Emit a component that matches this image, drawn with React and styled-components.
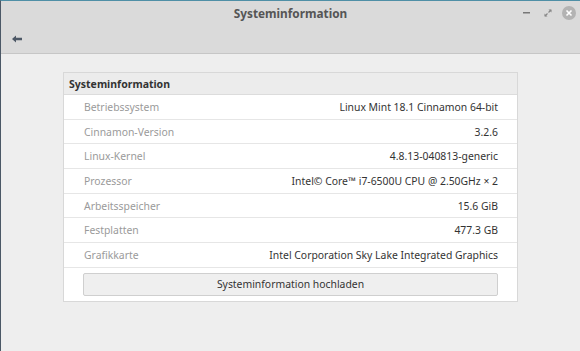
import styled, { createGlobalStyle } from "styled-components";

const Global = createGlobalStyle`
  html, body { margin: 0; padding: 0; }
  body {
    width: 580px;
    height: 351px;
    overflow: hidden;
    font-family: "Noto Sans", "DejaVu Sans", sans-serif;
    background: #eeeeee;
  }
`;

const Win = styled.div`
  width: 580px;
  height: 351px;
  box-sizing: border-box;
  border-left: 1px solid #4b5866;
  border-top: 1px solid #4f8fa6;
  display: flex;
  flex-direction: column;
  background: #eeeeee;
`;

const Header = styled.div`
  background: #dadada;
  border-bottom: 1px solid #c6c6c6;
  height: 52px;
  display: flex;
  flex-direction: column;
`;

const TitleBar = styled.div`
  height: 23px;
  display: grid;
  grid-template-columns: 1fr auto 1fr;
  align-items: center;
`;

const Title = styled.div`
  font-size: 11.8px;
  font-weight: bold;
  color: #555;
`;

const Controls = styled.div`
  justify-self: end;
  display: flex;
  align-items: center;
  gap: 8px;
  padding-right: 4px;
`;

const Ctl = styled.span`
  display: inline-flex;
  width: 13px;
  height: 12px;
  align-items: center;
  justify-content: center;
`;

const Close = styled.span`
  width: 14px;
  height: 14px;
  border-radius: 50%;
  background: #b3b3b3;
  display: inline-flex;
  align-items: center;
  justify-content: center;
`;

const Toolbar = styled.div`
  flex: 1;
  display: flex;
  align-items: center;
  padding-left: 11px;
  padding-top: 1px;
`;

const Body = styled.div`
  flex: 1;
  padding: 18px 62px 0 62px;
`;

const Card = styled.div`
  border: 1px solid #d8d8d8;
  background: #ffffff;
  padding-bottom: 5px;
`;

const CardHead = styled.div`
  background: #ececec;
  height: 21px;
  display: flex;
  align-items: center;
  padding-left: 5px;
  font-size: 10.5px;
  font-weight: bold;
  color: #333;
  border-bottom: 1px solid #dcdcdc;
`;

const Row = styled.div`
  height: 23.7px;
  border-bottom: 1px solid #e6e6e6;
  display: flex;
  align-items: center;
  justify-content: space-between;
  padding: 0 19px 0 20px;
  font-size: 10.4px;
`;

const Label = styled.span`
  color: #9a9a9a;
`;

const Value = styled.span`
  color: #333;
`;

const Upload = styled.button`
  display: block;
  margin: 5px 19px 0 19px;
  width: calc(100% - 38px);
  height: 23px;
  border: 1px solid #cfcfcf;
  border-radius: 2px;
  background: #efefef;
  font-family: inherit;
  font-size: 10.4px;
  color: #333;
`;

const rows = [
  ["Betriebssystem", "Linux Mint 18.1 Cinnamon 64-bit"],
  ["Cinnamon-Version", "3.2.6"],
  ["Linux-Kernel", "4.8.13-040813-generic"],
  ["Prozessor", "Intel© Core™ i7-6500U CPU @ 2.50GHz × 2"],
  ["Arbeitsspeicher", "15.6 GiB"],
  ["Festplatten", "477.3 GB"],
  ["Grafikkarte", "Intel Corporation Sky Lake Integrated Graphics"],
];

export default function App() {
  return (
    <Win>
      <Global />
      <Header>
        <TitleBar>
          <span />
          <Title>Systeminformation</Title>
          <Controls>
            <Ctl>
              <svg width="8" height="2"><rect width="7" height="1.5" fill="#777" /></svg>
            </Ctl>
            <Ctl>
              <svg width="10" height="10" viewBox="0 0 10 10">
                <path d="M5.5 1.5h3v3zM4.5 8.5h-3v-3z" fill="#888" />
                <path d="M8 2L5.5 4.5M2 8l2.5-2.5" stroke="#888" strokeWidth="1.2" />
              </svg>
            </Ctl>
            <Close>
              <svg width="8" height="8" viewBox="0 0 8 8">
                <path d="M1.5 1.5l5 5M6.5 1.5l-5 5" stroke="#fff" strokeWidth="1.6" />
              </svg>
            </Close>
          </Controls>
        </TitleBar>
        <Toolbar>
          <svg width="10" height="8" viewBox="0 0 10 8">
            <path d="M0 4l4-3.5v2.3h6v2.4H4v2.3z" fill="#4d5866" />
          </svg>
        </Toolbar>
      </Header>
      <Body>
        <Card>
          <CardHead>Systeminformation</CardHead>
          {rows.map(([k, v]) => (
            <Row key={k}>
              <Label>{k}</Label>
              <Value>{v}</Value>
            </Row>
          ))}
          <Upload>Systeminformation hochladen</Upload>
        </Card>
      </Body>
    </Win>
  );
}
